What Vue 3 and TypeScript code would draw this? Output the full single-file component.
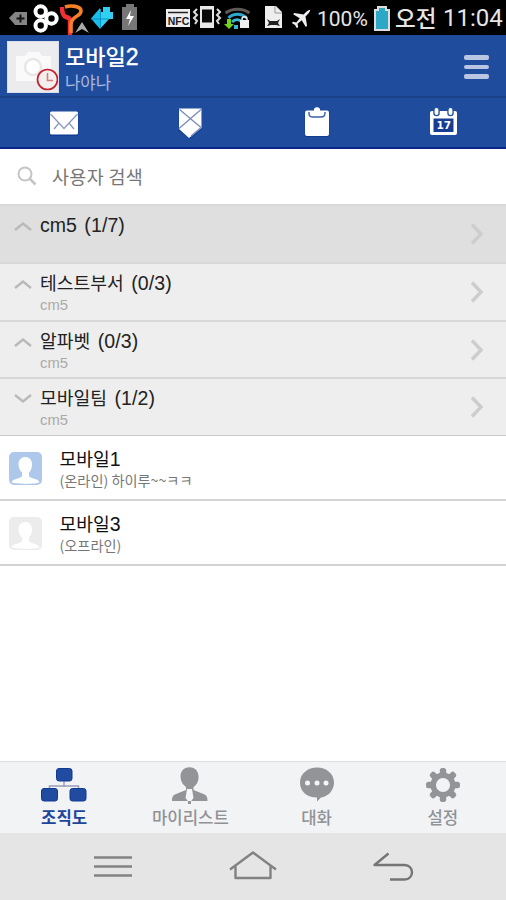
<script setup lang="ts">
interface Department {
  name: string
  count: string
  parent: string
  open: boolean
  root: boolean
}

interface Member {
  name: string
  digit: string
  state: string
  online: boolean
}

interface Tab {
  id: string
  label: string
  active: boolean
}

const departments: Department[] = [
  { name: 'cm5', count: '(1/7)', parent: '', open: false, root: true },
  { name: '테스트부서', count: '(0/3)', parent: 'cm5', open: false, root: false },
  { name: '알파벳', count: '(0/3)', parent: 'cm5', open: false, root: false },
  { name: '모바일팀', count: '(1/2)', parent: 'cm5', open: true, root: false },
]

const members: Member[] = [
  { name: '모바일', digit: '1', state: '(온라인) 하이루~~ㅋㅋ', online: true },
  { name: '모바일', digit: '3', state: '(오프라인)', online: false },
]

const tabs: Tab[] = [
  { id: 'org', label: '조직도', active: true },
  { id: 'list', label: '마이리스트', active: false },
  { id: 'chat', label: '대화', active: false },
  { id: 'settings', label: '설정', active: false },
]

const teeth: number[] = [0, 45, 90, 135, 180, 225, 270, 315]
</script>

<template>
  <div class="screen">
    <div class="status">
      <svg class="notices" width="150" height="35" viewBox="0 0 150 35">
        <path d="M9 18l6-6h12v13H15z" fill="#858585" />
        <path d="M20.500 14.500v8M16.500 18.500h8" stroke="#151515" stroke-width="2" />
        <g fill="none" stroke="#fff" stroke-width="4">
          <circle cx="40.700" cy="11.500" r="5.200" />
          <circle cx="40.700" cy="25.500" r="5.200" />
          <circle cx="51.500" cy="18.500" r="5.200" />
        </g>
        <path d="M62 7c0 5 1 9 4 10s4 1 4 4v15" fill="none" stroke="#f22f32" stroke-width="4.500" />
        <path d="M65 7c6-2 16-1 16 4 0 6-9 4-10 13v9" fill="none" stroke="#f58025" stroke-width="3.600" />
        <path d="M75 33l7-11 7 11-7-4z" fill="#aaa" />
        <path d="M91 18.500l9-10.500v21z" fill="#19bdeb" />
        <path d="M100 12h3V7h7v5h3v7h-4l-9 10z" fill="#30d0f3" />
        <path d="M91 19h18M100.500 9v19" stroke="#0a92c2" />
        <path d="M126 4h8v3h3v23h-15V7h4z" fill="#777" />
        <path d="M131 10l-5 9h4l-2 7 6-10h-4z" fill="#fff" />
      </svg>
      <svg class="signals" width="150" height="35" viewBox="0 0 150 35">
        <path d="M1 9h24v18H1z" fill="#eee" />
        <path d="M3 12.500h20" stroke="#222" stroke-width="1.500" />
        <text x="2.700" y="25" class="nfc">NFC</text>
        <path d="M35 6h14v22H35z" fill="#e8e8e8" />
        <path d="M37 9.500h10v13H37z" fill="#090909" />
        <path d="M32 9l-3 3 3 3-3 3 3 3-2 3M52 9l3 3-3 3 3 3-3 3 2 3" fill="none" stroke="#ddd" stroke-width="2" />
        <g fill="none" stroke-width="3">
          <path d="M60.500 13c7-5 17-5 24 0" stroke="#5f5957" />
          <path d="M63.500 18c5-5 13-5 18 0" stroke="#2da9cf" />
          <path d="M67 22c3-3 7-3 10 0" stroke="#3bbbdc" />
        </g>
        <path d="M62 19h4v5h3l-5 5-5-5h3z" fill="#70d21c" />
        <path d="M69 25h4v4h-4z" fill="#38b7dc" />
        <path d="M75 20h9v8h-9z" fill="#eee" />
        <path d="M77 21v-2c0-3 5-3 5 0v2" fill="none" stroke="#eee" stroke-width="1.500" />
        <path d="M100 6h11l6 6v16h-17z" fill="#eee" />
        <path d="M110 6v7h7" fill="none" stroke="#999" />
        <path d="M102 19l3 2h7l3-2-2 4 2 3-4-1h-5l-4 1 2-3z" fill="#222" />
        <g transform="translate(137 18) rotate(45) scale(.9)">
          <path d="M0-13c2 2 1.500 6 1.500 9L10 2v2L1.500 2 1 8l3 2v2L0 11l-4 1v-2l3-2-.5-6L-10 4V2l8.500-6c0-3-.5-7 1.500-9z" fill="#eee" />
        </g>
      </svg>
      <span class="percent">100%</span>
      <svg class="battery" width="18" height="26" viewBox="0 0 18 26">
        <path d="M5 2h8v3h3v20H2V5h3z" fill="#2ca7c5" stroke="#ddd" stroke-width="2" />
      </svg>
      <span class="meridiem">오전</span>
      <span class="clock">11:04</span>
    </div>

    <header class="profile">
      <svg class="photo" width="52" height="52" viewBox="0 0 52 52">
        <path d="M0 0h52v52H0z" fill="#ececee" />
        <path d="M9 15h9l3-4h11l3 4h9v25H9z" fill="#fafafa" />
        <circle cx="26" cy="26" r="8" fill="#fff" stroke="#e7e7e8" stroke-width="2.500" />
        <circle cx="40.500" cy="38.500" r="10" fill="#f4eeee" stroke="#c4232b" stroke-width="1.700" />
        <path d="M40.500 32v7.500H46" fill="none" stroke="#d47b7b" stroke-width="1.500" />
        <path d="M.5.500h51v51H.5z" fill="none" stroke="#d9deea" />
      </svg>
      <div class="identity">
        <div class="me">모바일<span class="me-digit">2</span></div>
        <div class="nickname">나야나</div>
      </div>
      <div class="menu"><i></i><i></i><i></i></div>
    </header>

    <nav class="tools">
      <div>
        <svg width="32" height="32" viewBox="0 0 32 32">
          <rect x="1.500" y="5" width="29" height="24" rx="2" fill="#103c94" />
          <rect x="2" y="4.500" width="28" height="23" rx="1.500" fill="#fff" />
          <path d="M2.500 7L16 21.500 29.500 7M11 16l-5 6M21 16l5 6" fill="none" stroke="#8b9cc6" stroke-width="1.400" />
        </svg>
      </div>
      <div>
        <svg width="32" height="32" viewBox="0 0 32 32">
          <path d="M4.500 2H28v20L16 32 4.500 24z" fill="#103c94" />
          <path d="M5 1.500h22.500V21L15 31 5 22z" fill="#fff" />
          <path d="M5.500 2.500l21.500 18M27 2.500L5 21.500M26.500 21L17 29" fill="none" stroke="#7d8fbd" stroke-width="1.400" />
        </svg>
      </div>
      <div>
        <svg width="32" height="32" viewBox="0 0 32 32">
          <rect x="3.500" y="4" width="25" height="26" rx="2" fill="#103c94" />
          <rect x="4" y="3.500" width="24" height="25.500" rx="2" fill="#fff" />
          <path d="M8 5v2c0 3 2 3 4 3h8c3 0 4-1 4-4V5" fill="#fff" stroke="#3962a9" stroke-width="1.400" />
          <path d="M9 8V5l4-1V2c1-2.500 5-2.500 6 0v2l4 1v3z" fill="#fff" />
        </svg>
      </div>
      <div>
        <svg width="32" height="32" viewBox="0 0 32 32">
          <rect x="3" y="4" width="27" height="24" rx="2" fill="#fff" />
          <path d="M6.500 11.500h20V25h-20z" fill="#173d92" />
          <path d="M9.500 2v4M23.500 2v4" stroke="#23509f" stroke-width="6.500" stroke-linecap="round" />
          <path d="M9.500 3v3M23.500 3v3" stroke="#fff" stroke-width="3.800" stroke-linecap="round" />
          <text x="9.500" y="22" class="date">17</text>
        </svg>
      </div>
    </nav>

    <div class="search">
      <svg width="20" height="20" viewBox="0 0 20 20">
        <circle cx="8" cy="8" r="6.500" fill="none" stroke="#c4c4c4" stroke-width="2" />
        <path d="M12.500 12.500l6 6" stroke="#c4c4c4" stroke-width="2.500" />
      </svg>
      <span>사용자 검색</span>
    </div>

    <section v-for="item in departments" :key="item.name" class="dept" :class="{ root: item.root }">
      <svg class="fold" width="18" height="10" viewBox="0 0 18 10">
        <path :d="item.open ? 'M1 1l8 6.500L17 1' : 'M1 9l8-6.500L17 9'" fill="none" stroke="#b9b9b9" stroke-width="2.300" />
      </svg>
      <div class="dept-text">
        <div class="dept-name"><span :class="{ latin: item.root }">{{ item.name }}</span><span class="latin count">{{ item.count }}</span></div>
        <div class="parent">{{ item.parent }}</div>
      </div>
      <svg class="go" width="13" height="22" viewBox="0 0 13 22">
        <path d="M1 1.500l9 9.500-9 9.500" fill="none" stroke="#cdcdcd" stroke-width="3.400" />
      </svg>
    </section>

    <section v-for="item in members" :key="item.digit" class="member">
      <svg width="33" height="33" viewBox="0 0 33 33">
        <rect width="33" height="33" rx="5" :fill="item.online ? '#aec8ec' : '#ececec'" />
        <path d="M9.500 12c0-9.500 13.500-9.500 13.500 0 0 4-1 6.500-3 8.500v3.500c2 3 8 2 10.500 6-2 2.500-26 2.500-28 0C5 26 11 27 13 24v-3.500c-2-2-3.500-4.500-3.500-8.500z" fill="#fff" />
      </svg>
      <div class="member-text">
        <div class="member-name">{{ item.name }}<span class="latin">{{ item.digit }}</span></div>
        <div class="state">{{ item.state }}</div>
      </div>
    </section>

    <div class="blank"></div>

    <nav class="tabs">
      <div v-for="tab in tabs" :key="tab.id" class="tab" :class="{ active: tab.active }">
        <svg width="48" height="38" viewBox="0 0 48 38">
          <g v-if="tab.id === 'org'">
            <path d="M24 14v6M9.500 24v-5h29v5" fill="none" stroke="#98a0b5" stroke-width="1.500" />
            <g fill="#204ba0" stroke="#103a92">
              <rect x="16.500" y="1.500" width="15.500" height="12.500" rx="2.500" />
              <rect x="1.500" y="21.500" width="16" height="12.500" rx="2.500" />
              <rect x="30" y="21.500" width="16" height="12.500" rx="2.500" />
            </g>
          </g>
          <g v-else-if="tab.id === 'list'">
            <path d="M14.500 10C14-3 33-3 32.500 10c0 5-2 8-5 10v3l10 4c3 1 4 3 4 7H6c0-4 1-6 4-7l10-4v-3c-3-2-5-5-5.500-10z" fill="#929497" />
            <path d="M21 22h5l1.500 9-4 5-4-5z" fill="#f4f5f7" />
            <path d="M22 34h3v3h-3z" fill="#929497" />
          </g>
          <g v-else-if="tab.id === 'chat'">
            <path d="M24 .5c9 0 17 6 17 15 0 8-6 14-13 15l-4 4v-4c-10 0-17-6-17-15s8-15 17-15z" fill="#929497" />
            <circle cx="14.500" cy="16" r="2.500" fill="#f4f5f7" />
            <circle cx="24" cy="16" r="2.500" fill="#f4f5f7" />
            <circle cx="33" cy="16" r="2.500" fill="#f4f5f7" />
          </g>
          <g v-else transform="translate(24 18)">
            <rect v-for="angle in teeth" :key="angle" x="-3.200" y="-17" width="6.400" height="9" rx="2.500" fill="#929497" :transform="`rotate(${angle})`" />
            <circle r="9.800" fill="none" stroke="#929497" stroke-width="5.500" />
          </g>
        </svg>
        <span>{{ tab.label }}</span>
      </div>
    </nav>

    <footer class="system">
      <svg width="42" height="34" viewBox="0 0 42 34">
        <path d="M2 7.500h38M2 16.500h38M2 25.500h38" stroke="#828282" stroke-width="2.400" />
      </svg>
      <svg width="50" height="34" viewBox="0 0 50 34">
        <path d="M2 19.500L25 2.500l23 17M7.500 16.500V28h35V16.500" fill="none" stroke="#828282" stroke-width="2.400" stroke-linejoin="round" />
      </svg>
      <svg width="42" height="34" viewBox="0 0 42 34">
        <path d="M16.500 3.500L2.500 15h30c10 0 10 14.500 0 14.500H18" fill="none" stroke="#757575" stroke-width="2.400" stroke-linejoin="round" />
      </svg>
    </footer>
  </div>
</template>

<style>
body {
  margin: 0;
}
</style>

<style scoped>
.screen {
  width: 506px;
  height: 900px;
  display: flex;
  flex-direction: column;
  overflow: hidden;
  background: #fff;
  color: #222;
  font-family: "Noto Sans CJK KR", sans-serif;
  white-space: nowrap;
}
.screen > * {
  box-sizing: border-box;
  flex-shrink: 0;
}
svg {
  display: block;
  flex-shrink: 0;
}
.status {
  height: 35px;
  display: flex;
  align-items: center;
  background: #000;
  color: #e6e6e6;
  line-height: 35px;
}
.signals {
  margin-left: 15px;
}
.nfc {
  font: bold 10.500px "Liberation Sans", sans-serif;
  fill: #222;
}
.percent {
  width: 56px;
  padding: 3px 0 0 2px;
  box-sizing: border-box;
  font-family: Roboto, sans-serif;
  font-size: 21px;
}
.battery {
  margin-left: 2px;
}
.meridiem {
  width: 48px;
  margin-left: 4px;
  font-size: 22.500px;
  font-weight: 500;
}
.clock {
  font-family: Roboto, sans-serif;
  font-size: 24px;
  padding-top: 2px;
}
.profile {
  height: 63px;
  display: flex;
  align-items: flex-start;
  padding: 6px 17px 0 7px;
  background: #204c9e;
  border-bottom: 2px solid #1b4287;
}
.identity {
  flex: 1;
  padding-left: 6px;
  color: #fff;
}
.me {
  height: 30px;
  line-height: 29px;
  font-size: 22px;
  font-weight: 500;
}
.me-digit {
  font-family: "Liberation Sans", sans-serif;
  font-size: 23px;
  -webkit-text-stroke: 0.4px #fff;
}
.nickname {
  line-height: 22px;
  font-size: 16.700px;
  color: #a9b8d9;
}
.menu {
  display: flex;
  flex-direction: column;
  gap: 5px;
  padding-top: 14px;
}
.menu i {
  width: 25px;
  height: 4.500px;
  border-radius: 2px;
  background: #b9c5e3;
}
.tools {
  height: 51px;
  display: grid;
  grid-template-columns: repeat(4, 1fr);
  justify-items: center;
  padding: 9px 0 0 1px;
  background: #204c9e;
  border-bottom: 2px solid #0b2687;
}
.date {
  font: bold 10.500px "DejaVu Sans", sans-serif;
  fill: #fff;
}
.search {
  height: 55px;
  display: flex;
  align-items: center;
  padding: 0 0 1px 17px;
  font-size: 18.500px;
  letter-spacing: 0.300px;
  color: #777;
}
.search span {
  padding-left: 15px;
}
.dept {
  height: 57.750px;
  display: flex;
  background: #eee;
  border-top: 2px solid #d8d8d8;
  padding: 5px 22px 0 14px;
}
.dept.root {
  background: #dfdfdf;
}
.fold {
  margin-top: 10px;
}
.dept-text {
  flex: 1;
  padding-left: 8px;
}
.dept-name {
  height: 26px;
  line-height: 26px;
  font-size: 18.200px;
}
.latin {
  font-family: "Liberation Sans", sans-serif;
  font-size: 19.500px;
}
.count {
  margin-left: 7.500px;
  letter-spacing: 0.100px;
}
.parent {
  height: 20px;
  line-height: 20px;
  font-family: "Liberation Sans", sans-serif;
  font-size: 14.800px;
  color: #aaa;
}
.go {
  margin-top: 12px;
}
.member {
  height: 65px;
  display: flex;
  padding: 16px 0 0 9px;
  border-bottom: 2px solid #d3d3d3;
}
.dept + .member {
  height: 66px;
  border-top: 1px solid #c9c9c9;
}
.member-text {
  margin-top: -7px;
  padding-left: 17.500px;
}
.member-name {
  height: 26px;
  line-height: 26px;
  font-size: 18.200px;
  color: #111;
}
.state {
  height: 18px;
  line-height: 18px;
  font-size: 14.200px;
  color: #777;
}
.blank {
  flex: 1;
}
.tabs {
  height: 72px;
  display: grid;
  grid-template-columns: repeat(4, 1fr);
  padding-left: 1px;
  background: #f2f3f5;
  border-top: 1px solid #dedede;
}
.tab {
  display: flex;
  flex-direction: column;
  align-items: center;
  padding-top: 5px;
  font-size: 16.700px;
  font-weight: 500;
  line-height: 24px;
  color: #909296;
}
.tab.active {
  color: #1d459c;
  font-weight: bold;
}
.system {
  height: 67px;
  display: flex;
  justify-content: center;
  align-items: flex-start;
  gap: 94px;
  padding-top: 17px;
  background: #e5e5e5;
}
</style>
